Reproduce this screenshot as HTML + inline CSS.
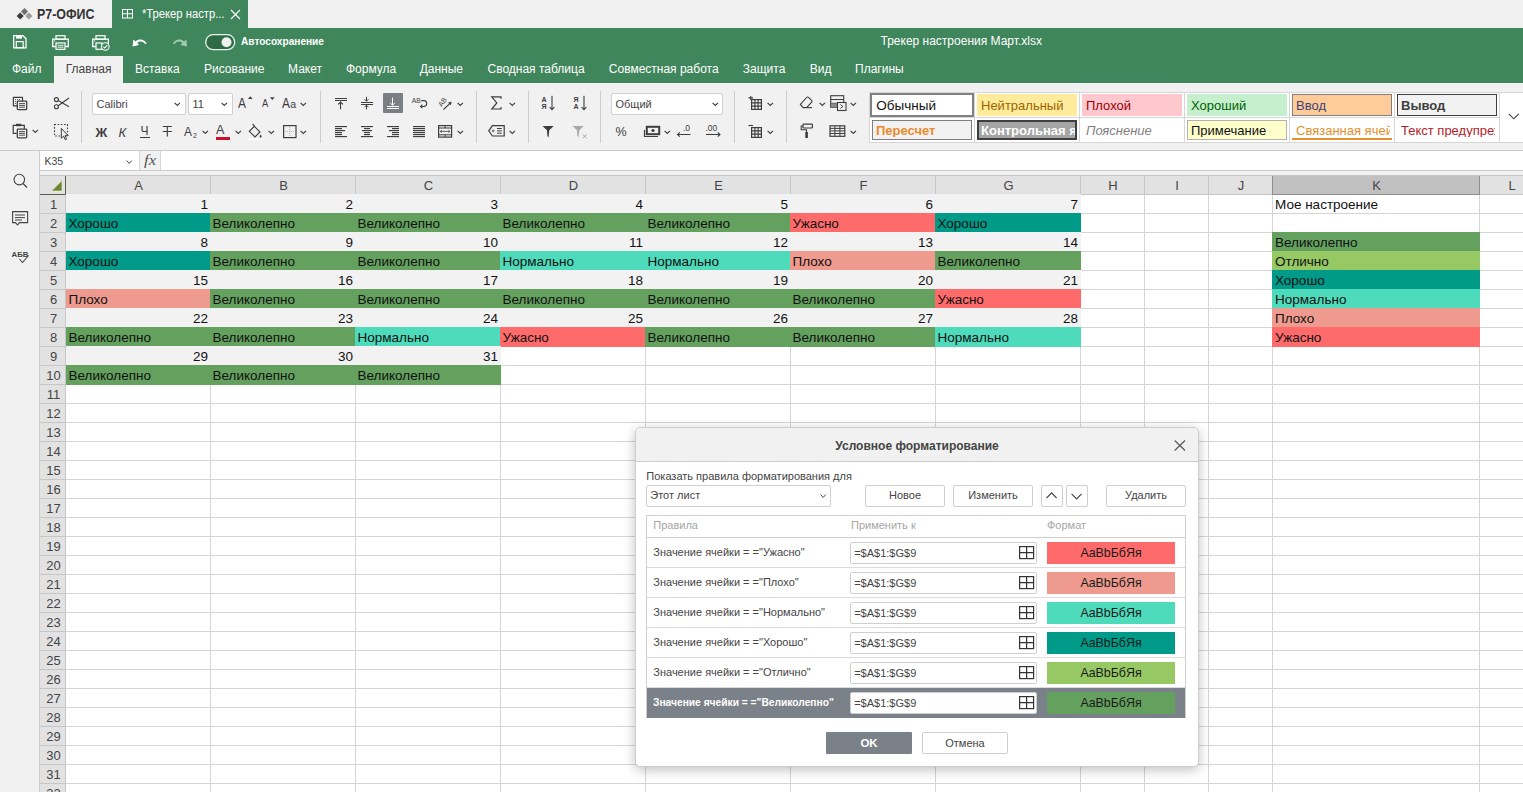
<!DOCTYPE html><html><head><meta charset="utf-8"><style>
*{margin:0;padding:0;box-sizing:border-box}
html,body{width:1523px;height:792px;overflow:hidden;background:#f1f1f1;font-family:"Liberation Sans",sans-serif;color:#444}
.ab{position:absolute}
.t{position:absolute;white-space:nowrap}
svg{position:absolute;overflow:visible}
</style></head><body>
<div class="ab" style="left:0;top:0;width:1523px;height:28px;background:#f0f0f0"></div>
<div class="ab" style="left:112px;top:0;width:136px;height:28px;background:#40865c"></div>
<div class="ab" style="left:0;top:28px;width:1523px;height:55px;background:#40865c"></div>
<div class="ab" style="left:54px;top:56px;width:69px;height:27px;background:#f1f1f1"></div>
<svg style="left:0;top:0" width="40" height="28"><rect x="17.70" y="13.50" width="5.0" height="5.0" fill="#3a3a3a" transform="rotate(45 20.2 16)"/><rect x="22.00" y="9.10" width="5.0" height="5.0" fill="#707070" transform="rotate(45 24.5 11.6)"/><rect x="26.40" y="13.50" width="5.0" height="5.0" fill="#9c9c9c" transform="rotate(45 28.9 16)"/></svg>
<div class="t" style="left:36.5px;top:7.15px;font-size:14px;line-height:14px;color:#333;font-weight:bold;transform:scaleX(0.886);transform-origin:0 0;">Р7-ОФИС</div>
<svg style="left:122px;top:9px" width="12" height="11"><rect x="0.5" y="0.5" width="10" height="8.5" fill="none" stroke="#fff" stroke-width="1"/><line x1="5.5" y1="0.5" x2="5.5" y2="9" stroke="#fff"/><line x1="0.5" y1="4.75" x2="10.5" y2="4.75" stroke="#fff"/></svg>
<div class="t" style="left:142px;top:7.84px;font-size:12px;line-height:12px;color:#fff;font-weight:normal;transform:scaleX(0.935);transform-origin:0 0;">*Трекер настр...</div>
<svg style="left:230px;top:9px" width="11" height="11"><path d="M1 1 L10 10 M10 1 L1 10" stroke="#fff" stroke-width="1.1"/></svg>
<svg style="left:13px;top:35px" width="14" height="14"><path d="M0.7 0.7 H10 L13 3.7 V12.8 H0.7 Z" fill="none" stroke="#fff" stroke-width="1.3"/><rect x="3" y="1" width="6" height="2.6" fill="#fff"/><rect x="3.3" y="6.6" width="6.9" height="6" fill="none" stroke="#fff" stroke-width="1.2"/></svg>
<svg style="left:52px;top:35px" width="18" height="16"><rect x="4" y="0.7" width="9" height="3.5" fill="none" stroke="#fff" stroke-width="1.2"/><path d="M3.5 11.5 H0.7 V4.2 H16.3 V11.5 H13.5" fill="none" stroke="#fff" stroke-width="1.3"/><circle cx="2.6" cy="5.9" r="0.6" fill="#fff"/><rect x="4" y="8" width="9" height="6.3" fill="none" stroke="#fff" stroke-width="1.2"/><line x1="5.5" y1="10.3" x2="11.5" y2="10.3" stroke="#fff" stroke-width="0.9"/><line x1="5.5" y1="12.2" x2="11.5" y2="12.2" stroke="#fff" stroke-width="0.9"/></svg>
<svg style="left:92px;top:35px" width="18" height="16"><rect x="4" y="0.7" width="9" height="3.5" fill="none" stroke="#fff" stroke-width="1.2"/><path d="M3.5 11.5 H0.7 V4.2 H16.3 V11.5 H13.5" fill="none" stroke="#fff" stroke-width="1.3"/><circle cx="2.6" cy="5.9" r="0.6" fill="#fff"/><rect x="4" y="8" width="6" height="6.3" fill="none" stroke="#fff" stroke-width="1.2"/><circle cx="13.3" cy="11.5" r="3.8" fill="#40865c" stroke="#fff" stroke-width="1.1"/><path d="M11.4 11.6 L12.8 13 L15.3 10.2" fill="none" stroke="#fff" stroke-width="1.1"/></svg>
<svg style="left:132px;top:38px" width="16" height="10"><path d="M3.5 3.5 C7 0.5 12 1 14.8 5.5 L13 6 C11 3 7.5 2.8 5.2 4.8 L7 7 L0.6 8.6 L1.3 1.4 Z" fill="#fff"/></svg>
<svg style="left:172px;top:38px" width="16" height="10"><path d="M12.1 3.5 C8.6 0.5 3.6 1 0.8 5.5 L2.6 6 C4.6 3 8.1 2.8 10.4 4.8 L8.6 7 L15 8.6 L14.3 1.4 Z" fill="#a6c9b2"/></svg>
<svg style="left:205px;top:34px" width="31" height="17"><rect x="0.7" y="0.7" width="29" height="15" rx="7.5" fill="#2e6a45" stroke="#e8f5ec" stroke-width="1.3"/><circle cx="21.5" cy="8.2" r="5" fill="#eef1ee"/></svg>
<div class="t" style="left:240.5px;top:35.69px;font-size:11px;line-height:11px;color:#fff;font-weight:bold;transform:scaleX(0.92);transform-origin:0 0;">Автосохранение</div>
<div class="t" style="left:880.5px;top:35.44px;font-size:12px;line-height:12px;color:#fff;font-weight:normal;">Трекер настроения Март.xlsx</div>
<div class="t" style="left:12px;top:62.84px;font-size:12px;line-height:12px;color:#fff;font-weight:normal;">Файл</div>
<div class="t" style="left:65.8px;top:62.84px;font-size:12px;line-height:12px;color:#444;font-weight:normal;">Главная</div>
<div class="t" style="left:135px;top:62.84px;font-size:12px;line-height:12px;color:#fff;font-weight:normal;">Вставка</div>
<div class="t" style="left:204px;top:62.84px;font-size:12px;line-height:12px;color:#fff;font-weight:normal;">Рисование</div>
<div class="t" style="left:288px;top:62.84px;font-size:12px;line-height:12px;color:#fff;font-weight:normal;">Макет</div>
<div class="t" style="left:346px;top:62.84px;font-size:12px;line-height:12px;color:#fff;font-weight:normal;">Формула</div>
<div class="t" style="left:419.7px;top:62.84px;font-size:12px;line-height:12px;color:#fff;font-weight:normal;">Данные</div>
<div class="t" style="left:487.5px;top:62.84px;font-size:12px;line-height:12px;color:#fff;font-weight:normal;">Сводная таблица</div>
<div class="t" style="left:608.8px;top:62.84px;font-size:12px;line-height:12px;color:#fff;font-weight:normal;">Совместная работа</div>
<div class="t" style="left:742.8px;top:62.84px;font-size:12px;line-height:12px;color:#fff;font-weight:normal;">Защита</div>
<div class="t" style="left:809.7px;top:62.84px;font-size:12px;line-height:12px;color:#fff;font-weight:normal;">Вид</div>
<div class="t" style="left:855px;top:62.84px;font-size:12px;line-height:12px;color:#fff;font-weight:normal;">Плагины</div>
<div class="ab" style="left:0;top:83px;width:1523px;height:67px;background:#f1f1f1"></div>
<div class="ab" style="left:0;top:150px;width:1523px;height:1px;background:#cbcbcb"></div>
<svg style="left:12px;top:96px" width="16" height="15" viewBox="0 0 16 15"><path d="M5 9.8 H1.4 V1.4 H10.5 V5" fill="none" stroke="#3d3d3d" stroke-width="1.2" stroke-linejoin="round"/><path d="M3 3.5 H8.5 M3 5.5 H4.5 M3 7.5 H4.5" stroke="#3d3d3d" stroke-width="0.8" stroke-dasharray="1 1"/><rect x="5.3" y="5.2" width="9.4" height="8.4" rx="0.8" fill="none" stroke="#3d3d3d" stroke-width="1.3"/><path d="M7 7.6 H13 M7 9.4 H13 M7 11.2 H13" stroke="#3d3d3d" stroke-width="0.9"/></svg>
<svg style="left:53px;top:96px" width="17" height="15" viewBox="0 0 17 15"><circle cx="3.4" cy="3.6" r="2" fill="none" stroke="#3d3d3d" stroke-width="1.1"/><circle cx="3.4" cy="10.7" r="2" fill="none" stroke="#3d3d3d" stroke-width="1.1"/><path d="M5.2 4.6 L16 10.8 M5.2 9.7 L16 2" stroke="#3d3d3d" stroke-width="1.1"/></svg>
<svg style="left:12px;top:123px" width="16" height="16" viewBox="0 0 16 16"><path d="M4.5 10.4 H1.2 V2.4 H12.3 V5.8" fill="none" stroke="#3d3d3d" stroke-width="1.2"/><rect x="4" y="0.8" width="5.2" height="2.4" fill="#3d3d3d"/><rect x="5.3" y="6.2" width="9.4" height="8.6" rx="0.8" fill="none" stroke="#3d3d3d" stroke-width="1.3"/><path d="M7 8.6 H13 M7 10.4 H13 M7 12.2 H13" stroke="#3d3d3d" stroke-width="0.9"/></svg>
<svg style="left:32px;top:129px" width="7" height="5" viewBox="0 0 7 5"><path d="M0.6 0.8 L3.3 3.5 L6 0.8" fill="none" stroke="#3d3d3d" stroke-width="1.1"/></svg>
<svg style="left:53px;top:123px" width="17" height="19" viewBox="0 0 17 19"><rect x="1.5" y="1.5" width="13" height="11.5" fill="none" stroke="#3d3d3d" stroke-width="1.1" stroke-dasharray="1.6 1.6"/><path d="M8.3 5.3 L8.3 15.3 L10.6 13.2 L12.3 16.8 L13.6 16.2 L12 12.7 L15.2 12.7 Z" fill="#f1f1f1" stroke="#3d3d3d" stroke-width="1" stroke-linejoin="round"/></svg>
<div class="ab" style="left:81px;top:91px;width:1px;height:52px;background:#cdcdcd"></div>
<div class="ab" style="left:92px;top:93px;width:94px;height:22px;background:#fff;border:1px solid #cfcfcf;border-radius:2px"></div>
<div class="t" style="left:96.5px;top:98.69px;font-size:11px;line-height:11px;color:#444;font-weight:normal;">Calibri</div>
<svg style="left:174px;top:101.5px" width="7" height="5" viewBox="0 0 7 5"><path d="M0.6 0.8 L3.3 3.5 L6 0.8" fill="none" stroke="#3d3d3d" stroke-width="1.1"/></svg>
<div class="ab" style="left:188px;top:93px;width:45px;height:22px;background:#fff;border:1px solid #cfcfcf;border-radius:2px"></div>
<div class="t" style="left:192.5px;top:98.69px;font-size:11px;line-height:11px;color:#444;font-weight:normal;">11</div>
<svg style="left:221px;top:101.5px" width="7" height="5" viewBox="0 0 7 5"><path d="M0.6 0.8 L3.3 3.5 L6 0.8" fill="none" stroke="#3d3d3d" stroke-width="1.1"/></svg>
<div class="t" style="left:238.3px;top:95.95px;font-size:14px;line-height:14px;color:#3d3d3d;font-weight:normal;transform:scaleX(0.85);transform-origin:0 0;">A</div>
<svg style="left:248px;top:96px" width="5" height="4" viewBox="0 0 5 4"><path d="M0 3 L2.3 0.3 L4.6 3 Z" fill="#3d3d3d"/></svg>
<div class="t" style="left:261.8px;top:98.49px;font-size:11px;line-height:11px;color:#3d3d3d;font-weight:normal;transform:scaleX(0.85);transform-origin:0 0;">A</div>
<svg style="left:270px;top:97px" width="5" height="4" viewBox="0 0 5 4"><path d="M0 0.3 L2.3 3 L4.6 0.3 Z" fill="#3d3d3d"/></svg>
<div class="t" style="left:281.5px;top:95.95px;font-size:14px;line-height:14px;color:#3d3d3d;font-weight:normal;transform:scaleX(0.85);transform-origin:0 0;">A</div>
<div class="t" style="left:290.2px;top:98.91px;font-size:10.5px;line-height:10.5px;color:#3d3d3d;font-weight:normal;">a</div>
<svg style="left:300px;top:101.5px" width="7" height="5" viewBox="0 0 7 5"><path d="M0.6 0.8 L3.3 3.5 L6 0.8" fill="none" stroke="#3d3d3d" stroke-width="1.1"/></svg>
<div class="t" style="left:95.5px;top:125.50px;font-size:13px;line-height:13px;color:#3d3d3d;font-weight:bold;">Ж</div>
<div class="t" style="left:118.5px;top:125.50px;font-size:13px;line-height:13px;color:#3d3d3d;font-weight:normal;font-style:italic;">К</div>
<div class="t" style="left:140.5px;top:125.34px;font-size:12px;line-height:12px;color:#3d3d3d;font-weight:normal;">Ч</div>
<div class="ab" style="left:140px;top:137px;width:10px;height:1.2px;background:#3d3d3d"></div>
<svg style="left:162px;top:125px" width="11" height="13" viewBox="0 0 11 13"><path d="M0.8 1.5 H9.8 M5.3 1.5 V11.5 M0.8 6.5 H9.8" stroke="#3d3d3d" stroke-width="1.1"/></svg>
<div class="t" style="left:183.5px;top:125.20px;font-size:13px;line-height:13px;color:#3d3d3d;font-weight:normal;transform:scaleX(0.92);transform-origin:0 0;">A</div>
<div class="t" style="left:193px;top:131.57px;font-size:7px;line-height:7px;color:#3d3d3d;font-weight:normal;">2</div>
<svg style="left:202px;top:129.5px" width="7" height="5" viewBox="0 0 7 5"><path d="M0.6 0.8 L3.3 3.5 L6 0.8" fill="none" stroke="#3d3d3d" stroke-width="1.1"/></svg>
<div class="t" style="left:216px;top:124.44px;font-size:12px;line-height:12px;color:#3d3d3d;font-weight:normal;transform:scaleX(1.05);transform-origin:0 0;">A</div>
<div class="ab" style="left:216px;top:137px;width:14px;height:2.6px;background:#c8102e"></div>
<svg style="left:235px;top:129.5px" width="7" height="5" viewBox="0 0 7 5"><path d="M0.6 0.8 L3.3 3.5 L6 0.8" fill="none" stroke="#3d3d3d" stroke-width="1.1"/></svg>
<svg style="left:248px;top:123px" width="17" height="17" viewBox="0 0 17 17"><path d="M6.3 3.3 L12 9 L7 14 L1.3 8.3 Z" fill="none" stroke="#3d3d3d" stroke-width="1.1"/><path d="M4.5 1 L6.8 3.4" stroke="#3d3d3d" stroke-width="1.1"/><path d="M12.6 11.6 Q14 13.2 13.6 14.1 A1 1 0 0 1 11.7 14.1 Q11.3 13.2 12.6 11.6 Z" fill="#3d3d3d"/><rect x="0" y="15.4" width="14" height="1.6" fill="#fff"/></svg>
<svg style="left:268px;top:129.5px" width="7" height="5" viewBox="0 0 7 5"><path d="M0.6 0.8 L3.3 3.5 L6 0.8" fill="none" stroke="#3d3d3d" stroke-width="1.1"/></svg>
<svg style="left:282px;top:124px" width="16" height="15" viewBox="0 0 16 15"><rect x="1.6" y="1.6" width="12.4" height="12" fill="none" stroke="#3d3d3d" stroke-width="1.2"/><path d="M7.8 3 V13 M3 7.6 H13" stroke="#9a9a9a" stroke-width="0.8" stroke-dasharray="1 1"/></svg>
<svg style="left:300px;top:129.5px" width="7" height="5" viewBox="0 0 7 5"><path d="M0.6 0.8 L3.3 3.5 L6 0.8" fill="none" stroke="#3d3d3d" stroke-width="1.1"/></svg>
<div class="ab" style="left:320px;top:91px;width:1px;height:52px;background:#cdcdcd"></div>
<svg style="left:334px;top:97px" width="14" height="14" viewBox="0 0 14 14"><rect x="1" y="1" width="12" height="1" fill="#3d3d3d"/><rect x="1" y="3" width="12" height="1" fill="#3d3d3d"/><path d="M6.5 5 V12.3 M4.1 7.4 L6.5 5 L8.9 7.4" fill="none" stroke="#3d3d3d" stroke-width="1.1"/></svg>
<svg style="left:360px;top:96px" width="14" height="14" viewBox="0 0 14 14"><rect x="1" y="6" width="12" height="1" fill="#3d3d3d"/><rect x="1" y="8" width="12" height="1" fill="#3d3d3d"/><path d="M6.5 0.8 V5.2 M4.5 3.2 L6.5 5.2 L8.5 3.2 M6.5 9.2 V13.4 M4.5 11.2 L6.5 9.2 L8.5 11.2" fill="none" stroke="#3d3d3d" stroke-width="1"/></svg>
<div class="ab" style="left:383px;top:93px;width:20px;height:20px;background:#7a7f86;border-radius:1px"></div>
<svg style="left:386px;top:96px" width="14" height="14" viewBox="0 0 14 14"><rect x="1" y="10" width="12" height="1" fill="#fff"/><rect x="1" y="12" width="12" height="1" fill="#fff"/><path d="M6.5 1.6 V9.2 M4.2 6.9 L6.5 9.2 L8.8 6.9" fill="none" stroke="#fff" stroke-width="1"/></svg>
<svg style="left:411px;top:96px" width="18" height="14" viewBox="0 0 18 14"><text x="0.8" y="6.6" font-family="Liberation Sans" font-size="6.8" fill="#3d3d3d">AB</text><path d="M10.2 4.6 H12.8 A2.9 2.9 0 0 1 12.8 10.4 H9.6 M11.4 8.6 L9.5 10.4 L11.4 12.2" fill="none" stroke="#3d3d3d" stroke-width="1.05"/></svg>
<svg style="left:437px;top:95px" width="16" height="16" viewBox="0 0 16 16"><text x="0" y="0" font-family="Liberation Sans" font-size="7" fill="#3d3d3d" transform="translate(4.8 12.2) rotate(-55)">AB</text><path d="M6.5 14.5 L14 7.3" stroke="#3d3d3d" stroke-width="1.05"/><path d="M14.6 6.7 L11 7.6 L13.8 10.3 Z" fill="#3d3d3d"/></svg>
<svg style="left:457px;top:101.5px" width="7" height="5" viewBox="0 0 7 5"><path d="M0.6 0.8 L3.3 3.5 L6 0.8" fill="none" stroke="#3d3d3d" stroke-width="1.1"/></svg>
<svg style="left:335px;top:126px" width="14" height="12" viewBox="0 0 14 12"><rect x="0" y="0" width="12" height="1.15" fill="#3d3d3d"/><rect x="0" y="2" width="7" height="1.15" fill="#3d3d3d"/><rect x="0" y="4" width="10" height="1.15" fill="#3d3d3d"/><rect x="0" y="6" width="7" height="1.15" fill="#3d3d3d"/><rect x="0" y="8" width="7" height="1.15" fill="#3d3d3d"/><rect x="0" y="10" width="12" height="1.15" fill="#3d3d3d"/></svg>
<svg style="left:361px;top:126px" width="14" height="12" viewBox="0 0 14 12"><rect x="0" y="0" width="12" height="1.15" fill="#3d3d3d"/><rect x="3" y="2" width="6" height="1.15" fill="#3d3d3d"/><rect x="1" y="4" width="10" height="1.15" fill="#3d3d3d"/><rect x="3" y="6" width="6" height="1.15" fill="#3d3d3d"/><rect x="3" y="8" width="6" height="1.15" fill="#3d3d3d"/><rect x="0" y="10" width="12" height="1.15" fill="#3d3d3d"/></svg>
<svg style="left:387px;top:126px" width="14" height="12" viewBox="0 0 14 12"><rect x="0" y="0" width="12" height="1.15" fill="#3d3d3d"/><rect x="5" y="2" width="7" height="1.15" fill="#3d3d3d"/><rect x="2" y="4" width="10" height="1.15" fill="#3d3d3d"/><rect x="5" y="6" width="7" height="1.15" fill="#3d3d3d"/><rect x="5" y="8" width="7" height="1.15" fill="#3d3d3d"/><rect x="0" y="10" width="12" height="1.15" fill="#3d3d3d"/></svg>
<svg style="left:413px;top:126px" width="14" height="12" viewBox="0 0 14 12"><rect x="0" y="0" width="12" height="1.15" fill="#3d3d3d"/><rect x="0" y="2" width="12" height="1.15" fill="#3d3d3d"/><rect x="0" y="4" width="12" height="1.15" fill="#3d3d3d"/><rect x="0" y="6" width="12" height="1.15" fill="#3d3d3d"/><rect x="0" y="8" width="12" height="1.15" fill="#3d3d3d"/><rect x="0" y="10" width="12" height="1.15" fill="#3d3d3d"/></svg>
<svg style="left:438px;top:125px" width="15" height="13" viewBox="0 0 15 13"><rect x="0.6" y="0.6" width="13" height="11.5" fill="none" stroke="#3d3d3d" stroke-width="1.2"/><path d="M0.6 3 H13.6 M0.6 9.8 H13.6 M7.1 0.6 V3 M7.1 9.8 V12" stroke="#3d3d3d" stroke-width="1"/><path d="M2.3 6.4 H12 M3.8 5.2 L2.3 6.4 L3.8 7.6 M10.5 5.2 L12 6.4 L10.5 7.6" fill="none" stroke="#3d3d3d" stroke-width="0.8"/></svg>
<svg style="left:457px;top:129.5px" width="7" height="5" viewBox="0 0 7 5"><path d="M0.6 0.8 L3.3 3.5 L6 0.8" fill="none" stroke="#3d3d3d" stroke-width="1.1"/></svg>
<div class="ab" style="left:476px;top:91px;width:1px;height:52px;background:#cdcdcd"></div>
<svg style="left:491px;top:96px" width="11" height="14" viewBox="0 0 11 14"><path d="M10 2.8 V0.8 H0.8 L5.8 6.9 L0.8 13 H10 V11" fill="none" stroke="#3d3d3d" stroke-width="1.2"/></svg>
<svg style="left:509px;top:101.5px" width="7" height="5" viewBox="0 0 7 5"><path d="M0.6 0.8 L3.3 3.5 L6 0.8" fill="none" stroke="#3d3d3d" stroke-width="1.1"/></svg>
<svg style="left:488px;top:125px" width="18" height="12" viewBox="0 0 18 12"><path d="M4.4 0.7 H16.2 V11 H4.4 L0.8 5.85 Z" fill="none" stroke="#3d3d3d" stroke-width="1.2"/><circle cx="5.2" cy="5.85" r="0.9" fill="none" stroke="#3d3d3d" stroke-width="0.8"/><path d="M9 3.5 H13.8 M9 5.85 H13.8 M9 8.2 H13.8" stroke="#3d3d3d" stroke-width="1"/></svg>
<svg style="left:509px;top:129.5px" width="7" height="5" viewBox="0 0 7 5"><path d="M0.6 0.8 L3.3 3.5 L6 0.8" fill="none" stroke="#3d3d3d" stroke-width="1.1"/></svg>
<div class="ab" style="left:528px;top:91px;width:1px;height:52px;background:#cdcdcd"></div>
<svg style="left:541px;top:95px" width="16" height="16" viewBox="0 0 16 16"><text x="0.5" y="6.8" font-family="Liberation Sans" font-weight="bold" font-size="7" fill="#3d3d3d">A</text><text x="0.5" y="14" font-family="Liberation Sans" font-weight="bold" font-size="7" fill="#3d3d3d">Я</text><path d="M11 0.8 V14.5 M8.6 12 L11 14.6 L13.4 12" fill="none" stroke="#3d3d3d" stroke-width="1.1"/></svg>
<svg style="left:573px;top:95px" width="16" height="16" viewBox="0 0 16 16"><text x="0.5" y="6.8" font-family="Liberation Sans" font-weight="bold" font-size="7" fill="#3d3d3d">Я</text><text x="0.5" y="14" font-family="Liberation Sans" font-weight="bold" font-size="7" fill="#3d3d3d">A</text><path d="M11 0.8 V14.5 M8.6 12 L11 14.6 L13.4 12" fill="none" stroke="#3d3d3d" stroke-width="1.1"/></svg>
<svg style="left:542px;top:125px" width="13" height="13" viewBox="0 0 13 13"><path d="M0.5 1 H11.7 L7.3 5.3 L6.5 12.5 L5.4 11 L5 5.3 Z" fill="#3d3d3d"/></svg>
<svg style="left:572px;top:125px" width="16" height="14" viewBox="0 0 16 14"><path d="M0.5 1 H11.7 L7.3 5.3 L6.5 12.5 L5.4 11 L5 5.3 Z" fill="#a8a8a8"/><path d="M10.8 9.4 L14.6 13.2 M14.6 9.4 L10.8 13.2" stroke="#a8a8a8" stroke-width="1"/></svg>
<div class="ab" style="left:600px;top:91px;width:1px;height:52px;background:#cdcdcd"></div>
<div class="ab" style="left:611px;top:93px;width:112px;height:22px;background:#fff;border:1px solid #cfcfcf;border-radius:2px"></div>
<div class="t" style="left:615.5px;top:98.69px;font-size:11px;line-height:11px;color:#444;font-weight:normal;">Общий</div>
<svg style="left:712px;top:101.5px" width="7" height="5" viewBox="0 0 7 5"><path d="M0.6 0.8 L3.3 3.5 L6 0.8" fill="none" stroke="#3d3d3d" stroke-width="1.1"/></svg>
<div class="t" style="left:615.5px;top:125.92px;font-size:12.5px;line-height:12.5px;color:#3d3d3d;font-weight:normal;">%</div>
<svg style="left:643px;top:124px" width="18" height="15" viewBox="0 0 18 15"><path d="M1.5 6 V12.5 H15" fill="none" stroke="#3d3d3d" stroke-width="1.2"/><rect x="3.8" y="2.8" width="12.4" height="7.4" fill="none" stroke="#3d3d3d" stroke-width="2"/><circle cx="10" cy="6.5" r="1.6" fill="#3d3d3d"/></svg>
<svg style="left:664px;top:129.5px" width="7" height="5" viewBox="0 0 7 5"><path d="M0.6 0.8 L3.3 3.5 L6 0.8" fill="none" stroke="#3d3d3d" stroke-width="1.1"/></svg>
<svg style="left:676px;top:124px" width="16" height="16" viewBox="0 0 16 16"><text x="7" y="7" font-family="Liberation Sans" font-size="8.5" fill="#3d3d3d">.0</text><path d="M14.5 10.5 H1.5 M3.8 8.3 L1.5 10.5 L3.8 12.7" fill="none" stroke="#3d3d3d" stroke-width="1.1"/></svg>
<svg style="left:705px;top:124px" width="17" height="16" viewBox="0 0 17 16"><text x="0.5" y="7" font-family="Liberation Sans" font-size="8.5" fill="#3d3d3d">.00</text><path d="M1 10.5 H15 M12.7 8.3 L15 10.5 L12.7 12.7" fill="none" stroke="#3d3d3d" stroke-width="1.1"/></svg>
<div class="ab" style="left:734px;top:91px;width:1px;height:52px;background:#cdcdcd"></div>
<svg style="left:747.5px;top:95.5px" width="15" height="15" viewBox="0 0 15 15"><rect x="3.6" y="3.6" width="9.8" height="9.8" fill="none" stroke="#3d3d3d" stroke-width="1.2"/><path d="M6.9 3.6 V13.4 M10.1 3.6 V13.4 M3.6 6.9 H13.4 M3.6 10.1 H13.4" stroke="#3d3d3d" stroke-width="1.1"/><path d="M0.5 1.9 H5 M2.75 0 V4" stroke="#3d3d3d" stroke-width="1.1"/></svg>
<svg style="left:767px;top:101.5px" width="7" height="5" viewBox="0 0 7 5"><path d="M0.6 0.8 L3.3 3.5 L6 0.8" fill="none" stroke="#3d3d3d" stroke-width="1.1"/></svg>
<svg style="left:747.5px;top:123.5px" width="15" height="15" viewBox="0 0 15 15"><rect x="3.6" y="3.6" width="9.8" height="9.8" fill="none" stroke="#3d3d3d" stroke-width="1.2"/><path d="M6.9 3.6 V13.4 M10.1 3.6 V13.4 M3.6 6.9 H13.4 M3.6 10.1 H13.4" stroke="#3d3d3d" stroke-width="1.1"/><path d="M0.5 1.5 H5" stroke="#3d3d3d" stroke-width="1.1"/></svg>
<svg style="left:767px;top:129.5px" width="7" height="5" viewBox="0 0 7 5"><path d="M0.6 0.8 L3.3 3.5 L6 0.8" fill="none" stroke="#3d3d3d" stroke-width="1.1"/></svg>
<div class="ab" style="left:786px;top:91px;width:1px;height:52px;background:#cdcdcd"></div>
<svg style="left:799px;top:96px" width="15" height="13" viewBox="0 0 15 13"><path d="M1.4 8.4 L7.6 1.5 A1.3 1.3 0 0 1 9.5 1.4 L12.6 4.3 A1.3 1.3 0 0 1 12.7 6.2 L7.6 11.6 H4.2 Z" fill="none" stroke="#3d3d3d" stroke-width="1.1"/><path d="M7.6 11.6 H13" stroke="#3d3d3d" stroke-width="1.1"/></svg>
<svg style="left:819px;top:101.5px" width="7" height="5" viewBox="0 0 7 5"><path d="M0.6 0.8 L3.3 3.5 L6 0.8" fill="none" stroke="#3d3d3d" stroke-width="1.1"/></svg>
<svg style="left:830px;top:95px" width="17" height="17" viewBox="0 0 17 17"><rect x="0.7" y="0.7" width="13" height="11.5" fill="none" stroke="#3d3d3d" stroke-width="1.1"/><path d="M0.7 4.5 H13.7 M0.7 8.3 H8" stroke="#3d3d3d" stroke-width="1"/><rect x="1" y="8.5" width="6.5" height="3.5" fill="#8a8a8a"/><rect x="7.5" y="7.5" width="8.5" height="8" fill="#f1f1f1" stroke="#3d3d3d" stroke-width="1.1"/><path d="M10.3 9.5 L13 11.5 L10.3 13.5" fill="none" stroke="#3d3d3d" stroke-width="0.9"/></svg>
<svg style="left:850px;top:101.5px" width="7" height="5" viewBox="0 0 7 5"><path d="M0.6 0.8 L3.3 3.5 L6 0.8" fill="none" stroke="#3d3d3d" stroke-width="1.1"/></svg>
<svg style="left:800px;top:123px" width="14" height="16" viewBox="0 0 14 16"><rect x="3" y="1.2" width="9.4" height="3.8" rx="0.8" fill="none" stroke="#3d3d3d" stroke-width="1.2"/><path d="M3 3 H1.2 V6.8 H6.5 V9" fill="none" stroke="#3d3d3d" stroke-width="1.1"/><rect x="5.3" y="9" width="2.6" height="6" fill="#3d3d3d"/></svg>
<svg style="left:829px;top:125px" width="18" height="12" viewBox="0 0 18 12"><rect x="1" y="0.8" width="14.8" height="10.5" fill="none" stroke="#3d3d3d" stroke-width="1.2"/><path d="M1 3.4 H15.8 M1 5.9 H15.8 M1 8.5 H15.8 M5.9 0.8 V11.3 M10.9 0.8 V11.3" stroke="#3d3d3d" stroke-width="1"/></svg>
<svg style="left:850px;top:129.5px" width="7" height="5" viewBox="0 0 7 5"><path d="M0.6 0.8 L3.3 3.5 L6 0.8" fill="none" stroke="#3d3d3d" stroke-width="1.1"/></svg>
<div class="ab" style="left:869px;top:92px;width:660px;height:51px;background:#fff;border:1px solid #d6d6d6"></div>
<div class="ab" style="left:974px;top:92px;width:1px;height:51px;background:#d6d6d6"></div>
<div class="ab" style="left:1079px;top:92px;width:1px;height:51px;background:#d6d6d6"></div>
<div class="ab" style="left:1184px;top:92px;width:1px;height:51px;background:#d6d6d6"></div>
<div class="ab" style="left:1289px;top:92px;width:1px;height:51px;background:#d6d6d6"></div>
<div class="ab" style="left:1394px;top:92px;width:1px;height:51px;background:#d6d6d6"></div>
<div class="ab" style="left:1499px;top:92px;width:1px;height:51px;background:#d6d6d6"></div>
<div class="ab" style="left:869px;top:117px;width:631px;height:1px;background:#d6d6d6"></div>
<div class="ab" style="left:870px;top:93px;width:104px;height:24px;background:#fff;border:2px solid #808080"></div>
<div class="t" style="left:876.3px;top:98.57px;font-size:13.5px;line-height:13.5px;color:#111;font-weight:normal;">Обычный</div>
<div class="ab" style="left:977px;top:94px;width:100px;height:22px;background:#ffeb9c;;overflow:hidden"></div>
<div class="t" style="left:981px;top:99.00px;width:94px;overflow:hidden;font-size:13px;line-height:13px;color:#9c6500;">Нейтральный</div>
<div class="ab" style="left:1082px;top:94px;width:100px;height:22px;background:#ffc7ce;;overflow:hidden"></div>
<div class="t" style="left:1086px;top:99.00px;width:94px;overflow:hidden;font-size:13px;line-height:13px;color:#9c0006;">Плохой</div>
<div class="ab" style="left:1187px;top:94px;width:100px;height:22px;background:#c6efce;;overflow:hidden"></div>
<div class="t" style="left:1191px;top:99.00px;width:94px;overflow:hidden;font-size:13px;line-height:13px;color:#006100;">Хороший</div>
<div class="ab" style="left:1292px;top:94px;width:100px;height:22px;background:#ffcc99;border:1px solid #7f7f7f;overflow:hidden"></div>
<div class="t" style="left:1296px;top:99.00px;width:94px;overflow:hidden;font-size:13px;line-height:13px;color:#3f3f76;">Ввод</div>
<div class="ab" style="left:1397px;top:94px;width:100px;height:22px;background:#f2f2f2;border:1.5px solid #3f3f3f;overflow:hidden"></div>
<div class="t" style="left:1401px;top:99.00px;width:94px;overflow:hidden;font-size:13px;line-height:13px;color:#3f3f3f;font-weight:bold;">Вывод</div>
<div class="ab" style="left:872px;top:120px;width:100px;height:20px;background:#f2f2f2;border:1px solid #7f7f7f;overflow:hidden"></div>
<div class="t" style="left:876px;top:124.00px;width:94px;overflow:hidden;font-size:13px;line-height:13px;color:#ea8a2a;font-weight:bold;">Пересчет</div>
<div class="ab" style="left:977px;top:120px;width:100px;height:20px;background:#a5a5a5;border:2.5px solid #3f3f3f;overflow:hidden"></div>
<div class="t" style="left:981px;top:124.00px;width:94px;overflow:hidden;font-size:13px;line-height:13px;color:#fff;font-weight:bold;">Контрольная ячейка</div>
<div class="ab" style="left:1082px;top:120px;width:100px;height:20px;background:#fff;;overflow:hidden"></div>
<div class="t" style="left:1086px;top:124.00px;width:94px;overflow:hidden;font-size:13px;line-height:13px;color:#7f7f7f;font-style:italic;">Пояснение</div>
<div class="ab" style="left:1187px;top:120px;width:100px;height:20px;background:#ffffcc;border:1px solid #b2b2b2;overflow:hidden"></div>
<div class="t" style="left:1191px;top:124.00px;width:94px;overflow:hidden;font-size:13px;line-height:13px;color:#111;">Примечание</div>
<div class="ab" style="left:1292px;top:120px;width:100px;height:20px;background:#fff;border-bottom:2.5px solid #e4902e;overflow:hidden"></div>
<div class="t" style="left:1296px;top:124.00px;width:94px;overflow:hidden;font-size:13px;line-height:13px;color:#e4902e;">Связанная ячейка</div>
<div class="ab" style="left:1397px;top:120px;width:100px;height:20px;background:#fff;;overflow:hidden"></div>
<div class="t" style="left:1401px;top:124.00px;width:94px;overflow:hidden;font-size:13px;line-height:13px;color:#b5202a;">Текст предупреждения</div>
<svg style="left:1508px;top:113px" width="12" height="8" viewBox="0 0 12 8"><path d="M0.8 0.8 L5.8 5.8 L10.8 0.8" fill="none" stroke="#3d3d3d" stroke-width="1.1"/></svg>
<div class="ab" style="left:40px;top:151px;width:1483px;height:19px;background:#fff"></div>
<div class="ab" style="left:139px;top:151px;width:22px;height:19px;background:#f1f1f1;border-left:1px solid #d5d5d5;border-right:1px solid #d5d5d5"></div>
<div class="ab" style="left:40px;top:170px;width:1483px;height:1px;background:#cbcbcb"></div>
<div class="ab" style="left:40px;top:171px;width:1483px;height:4px;background:#f1f1f1"></div>
<div class="t" style="left:44.5px;top:156.11px;font-size:10.5px;line-height:10.5px;color:#444;font-weight:normal;">K35</div>
<svg style="left:126px;top:159.5px" width="7" height="5" viewBox="0 0 7 5"><path d="M0.6 0.6 L3.2 3.4 L5.8 0.6" fill="none" stroke="#444" stroke-width="1"/></svg>
<div class="t" style="left:144.3px;top:153.30px;font-size:15px;line-height:15px;color:#555;font-weight:normal;font-family:'Liberation Serif',serif;font-style:italic;transform:scaleX(1.12);transform-origin:0 0;">fx</div>
<svg style="left:12px;top:173px" width="16" height="16" viewBox="0 0 16 16"><circle cx="7.3" cy="6.6" r="5.3" fill="none" stroke="#444" stroke-width="1.1"/><path d="M11 10.5 L15 14.5" stroke="#444" stroke-width="1.2"/></svg>
<svg style="left:12px;top:211px" width="17" height="16" viewBox="0 0 17 16"><path d="M0.6 0.6 H15.6 V11.6 H7.5 L5.5 14 L3.5 11.6 H0.6 Z" fill="none" stroke="#444" stroke-width="1.1"/><path d="M3 4 H13 M3 6.6 H13 M3 9 H10" stroke="#444" stroke-width="1"/></svg>
<svg style="left:11px;top:249px" width="19" height="15" viewBox="0 0 19 15"><text x="0.5" y="8" font-family="Liberation Sans" font-weight="bold" font-size="7.8" fill="#444">АБВ</text><path d="M8.5 10 L11.5 13.5 L17.5 6.5" fill="none" stroke="#444" stroke-width="1.1"/></svg>
<div class="ab" style="left:39px;top:151px;width:1px;height:641px;background:#cbcbcb"></div>
<div class="ab" style="left:66px;top:195px;width:1457px;height:597px;background:#fff"></div>
<div class="ab" style="left:66px;top:213px;width:1457px;height:1px;background:#d5d5d5"></div>
<div class="ab" style="left:66px;top:232px;width:1457px;height:1px;background:#d5d5d5"></div>
<div class="ab" style="left:66px;top:251px;width:1457px;height:1px;background:#d5d5d5"></div>
<div class="ab" style="left:66px;top:270px;width:1457px;height:1px;background:#d5d5d5"></div>
<div class="ab" style="left:66px;top:289px;width:1457px;height:1px;background:#d5d5d5"></div>
<div class="ab" style="left:66px;top:308px;width:1457px;height:1px;background:#d5d5d5"></div>
<div class="ab" style="left:66px;top:327px;width:1457px;height:1px;background:#d5d5d5"></div>
<div class="ab" style="left:66px;top:346px;width:1457px;height:1px;background:#d5d5d5"></div>
<div class="ab" style="left:66px;top:365px;width:1457px;height:1px;background:#d5d5d5"></div>
<div class="ab" style="left:66px;top:384px;width:1457px;height:1px;background:#d5d5d5"></div>
<div class="ab" style="left:66px;top:403px;width:1457px;height:1px;background:#d5d5d5"></div>
<div class="ab" style="left:66px;top:422px;width:1457px;height:1px;background:#d5d5d5"></div>
<div class="ab" style="left:66px;top:441px;width:1457px;height:1px;background:#d5d5d5"></div>
<div class="ab" style="left:66px;top:460px;width:1457px;height:1px;background:#d5d5d5"></div>
<div class="ab" style="left:66px;top:479px;width:1457px;height:1px;background:#d5d5d5"></div>
<div class="ab" style="left:66px;top:498px;width:1457px;height:1px;background:#d5d5d5"></div>
<div class="ab" style="left:66px;top:517px;width:1457px;height:1px;background:#d5d5d5"></div>
<div class="ab" style="left:66px;top:536px;width:1457px;height:1px;background:#d5d5d5"></div>
<div class="ab" style="left:66px;top:555px;width:1457px;height:1px;background:#d5d5d5"></div>
<div class="ab" style="left:66px;top:574px;width:1457px;height:1px;background:#d5d5d5"></div>
<div class="ab" style="left:66px;top:593px;width:1457px;height:1px;background:#d5d5d5"></div>
<div class="ab" style="left:66px;top:612px;width:1457px;height:1px;background:#d5d5d5"></div>
<div class="ab" style="left:66px;top:631px;width:1457px;height:1px;background:#d5d5d5"></div>
<div class="ab" style="left:66px;top:650px;width:1457px;height:1px;background:#d5d5d5"></div>
<div class="ab" style="left:66px;top:669px;width:1457px;height:1px;background:#d5d5d5"></div>
<div class="ab" style="left:66px;top:688px;width:1457px;height:1px;background:#d5d5d5"></div>
<div class="ab" style="left:66px;top:707px;width:1457px;height:1px;background:#d5d5d5"></div>
<div class="ab" style="left:66px;top:726px;width:1457px;height:1px;background:#d5d5d5"></div>
<div class="ab" style="left:66px;top:745px;width:1457px;height:1px;background:#d5d5d5"></div>
<div class="ab" style="left:66px;top:764px;width:1457px;height:1px;background:#d5d5d5"></div>
<div class="ab" style="left:66px;top:783px;width:1457px;height:1px;background:#d5d5d5"></div>
<div class="ab" style="left:66px;top:802px;width:1457px;height:1px;background:#d5d5d5"></div>
<div class="ab" style="left:210px;top:195px;width:1px;height:597px;background:#d5d5d5"></div>
<div class="ab" style="left:355px;top:195px;width:1px;height:597px;background:#d5d5d5"></div>
<div class="ab" style="left:500px;top:195px;width:1px;height:597px;background:#d5d5d5"></div>
<div class="ab" style="left:645px;top:195px;width:1px;height:597px;background:#d5d5d5"></div>
<div class="ab" style="left:790px;top:195px;width:1px;height:597px;background:#d5d5d5"></div>
<div class="ab" style="left:935px;top:195px;width:1px;height:597px;background:#d5d5d5"></div>
<div class="ab" style="left:1080px;top:195px;width:1px;height:597px;background:#d5d5d5"></div>
<div class="ab" style="left:1144px;top:195px;width:1px;height:597px;background:#d5d5d5"></div>
<div class="ab" style="left:1208px;top:195px;width:1px;height:597px;background:#d5d5d5"></div>
<div class="ab" style="left:1272px;top:195px;width:1px;height:597px;background:#d5d5d5"></div>
<div class="ab" style="left:1479px;top:195px;width:1px;height:597px;background:#d5d5d5"></div>
<div class="ab" style="left:1543px;top:195px;width:1px;height:597px;background:#d5d5d5"></div>
<div class="ab" style="left:40px;top:175px;width:1483px;height:1px;background:#c6c6c6"></div>
<div class="ab" style="left:40px;top:176px;width:1483px;height:18px;background:#e2e2e2"></div>
<div class="ab" style="left:40px;top:194px;width:1483px;height:1px;background:#c6c6c6"></div>
<div class="ab" style="left:40px;top:195px;width:25px;height:597px;background:#e2e2e2"></div>
<div class="ab" style="left:65px;top:176px;width:1px;height:616px;background:#c6c6c6"></div>
<div class="ab" style="left:1273px;top:176px;width:206px;height:18px;background:#c0c0c0"></div>
<div class="ab" style="left:210px;top:176px;width:1px;height:18px;background:#c6c6c6"></div>
<div class="ab" style="left:355px;top:176px;width:1px;height:18px;background:#c6c6c6"></div>
<div class="ab" style="left:500px;top:176px;width:1px;height:18px;background:#c6c6c6"></div>
<div class="ab" style="left:645px;top:176px;width:1px;height:18px;background:#c6c6c6"></div>
<div class="ab" style="left:790px;top:176px;width:1px;height:18px;background:#c6c6c6"></div>
<div class="ab" style="left:935px;top:176px;width:1px;height:18px;background:#c6c6c6"></div>
<div class="ab" style="left:1080px;top:176px;width:1px;height:18px;background:#c6c6c6"></div>
<div class="ab" style="left:1144px;top:176px;width:1px;height:18px;background:#c6c6c6"></div>
<div class="ab" style="left:1208px;top:176px;width:1px;height:18px;background:#c6c6c6"></div>
<div class="ab" style="left:1272px;top:176px;width:1px;height:18px;background:#c6c6c6"></div>
<div class="ab" style="left:1479px;top:176px;width:1px;height:18px;background:#c6c6c6"></div>
<div class="ab" style="left:1543px;top:176px;width:1px;height:18px;background:#c6c6c6"></div>
<div class="ab" style="left:1272px;top:176px;width:1px;height:19px;background:#8e8e8e"></div>
<div class="ab" style="left:1272px;top:194px;width:208px;height:1px;background:#8e8e8e"></div>
<div class="ab" style="left:1479px;top:176px;width:1px;height:19px;background:#8e8e8e"></div>
<div class="t" style="left:66px;width:145px;text-align:center;top:179.00px;font-size:13px;line-height:13px;color:#444;font-weight:normal;">A</div>
<div class="t" style="left:211px;width:145px;text-align:center;top:179.00px;font-size:13px;line-height:13px;color:#444;font-weight:normal;">B</div>
<div class="t" style="left:356px;width:145px;text-align:center;top:179.00px;font-size:13px;line-height:13px;color:#444;font-weight:normal;">C</div>
<div class="t" style="left:501px;width:145px;text-align:center;top:179.00px;font-size:13px;line-height:13px;color:#444;font-weight:normal;">D</div>
<div class="t" style="left:646px;width:145px;text-align:center;top:179.00px;font-size:13px;line-height:13px;color:#444;font-weight:normal;">E</div>
<div class="t" style="left:791px;width:145px;text-align:center;top:179.00px;font-size:13px;line-height:13px;color:#444;font-weight:normal;">F</div>
<div class="t" style="left:936px;width:145px;text-align:center;top:179.00px;font-size:13px;line-height:13px;color:#444;font-weight:normal;">G</div>
<div class="t" style="left:1081px;width:64px;text-align:center;top:179.00px;font-size:13px;line-height:13px;color:#444;font-weight:normal;">H</div>
<div class="t" style="left:1145px;width:64px;text-align:center;top:179.00px;font-size:13px;line-height:13px;color:#444;font-weight:normal;">I</div>
<div class="t" style="left:1209px;width:64px;text-align:center;top:179.00px;font-size:13px;line-height:13px;color:#444;font-weight:normal;">J</div>
<div class="t" style="left:1273px;width:207px;text-align:center;top:179.00px;font-size:13px;line-height:13px;color:#444;font-weight:normal;">K</div>
<div class="t" style="left:1480px;width:64px;text-align:center;top:179.00px;font-size:13px;line-height:13px;color:#444;font-weight:normal;">L</div>
<div class="ab" style="left:40px;top:194px;width:25px;height:1px;background:#c6c6c6"></div>
<div class="t" style="left:41px;width:25px;text-align:center;top:198.00px;font-size:13px;line-height:13px;color:#444;font-weight:normal;">1</div>
<div class="ab" style="left:40px;top:213px;width:25px;height:1px;background:#c6c6c6"></div>
<div class="t" style="left:41px;width:25px;text-align:center;top:217.00px;font-size:13px;line-height:13px;color:#444;font-weight:normal;">2</div>
<div class="ab" style="left:40px;top:232px;width:25px;height:1px;background:#c6c6c6"></div>
<div class="t" style="left:41px;width:25px;text-align:center;top:236.00px;font-size:13px;line-height:13px;color:#444;font-weight:normal;">3</div>
<div class="ab" style="left:40px;top:251px;width:25px;height:1px;background:#c6c6c6"></div>
<div class="t" style="left:41px;width:25px;text-align:center;top:255.00px;font-size:13px;line-height:13px;color:#444;font-weight:normal;">4</div>
<div class="ab" style="left:40px;top:270px;width:25px;height:1px;background:#c6c6c6"></div>
<div class="t" style="left:41px;width:25px;text-align:center;top:274.00px;font-size:13px;line-height:13px;color:#444;font-weight:normal;">5</div>
<div class="ab" style="left:40px;top:289px;width:25px;height:1px;background:#c6c6c6"></div>
<div class="t" style="left:41px;width:25px;text-align:center;top:293.00px;font-size:13px;line-height:13px;color:#444;font-weight:normal;">6</div>
<div class="ab" style="left:40px;top:308px;width:25px;height:1px;background:#c6c6c6"></div>
<div class="t" style="left:41px;width:25px;text-align:center;top:312.00px;font-size:13px;line-height:13px;color:#444;font-weight:normal;">7</div>
<div class="ab" style="left:40px;top:327px;width:25px;height:1px;background:#c6c6c6"></div>
<div class="t" style="left:41px;width:25px;text-align:center;top:331.00px;font-size:13px;line-height:13px;color:#444;font-weight:normal;">8</div>
<div class="ab" style="left:40px;top:346px;width:25px;height:1px;background:#c6c6c6"></div>
<div class="t" style="left:41px;width:25px;text-align:center;top:350.00px;font-size:13px;line-height:13px;color:#444;font-weight:normal;">9</div>
<div class="ab" style="left:40px;top:365px;width:25px;height:1px;background:#c6c6c6"></div>
<div class="t" style="left:41px;width:25px;text-align:center;top:369.00px;font-size:13px;line-height:13px;color:#444;font-weight:normal;">10</div>
<div class="ab" style="left:40px;top:384px;width:25px;height:1px;background:#c6c6c6"></div>
<div class="t" style="left:41px;width:25px;text-align:center;top:388.00px;font-size:13px;line-height:13px;color:#444;font-weight:normal;">11</div>
<div class="ab" style="left:40px;top:403px;width:25px;height:1px;background:#c6c6c6"></div>
<div class="t" style="left:41px;width:25px;text-align:center;top:407.00px;font-size:13px;line-height:13px;color:#444;font-weight:normal;">12</div>
<div class="ab" style="left:40px;top:422px;width:25px;height:1px;background:#c6c6c6"></div>
<div class="t" style="left:41px;width:25px;text-align:center;top:426.00px;font-size:13px;line-height:13px;color:#444;font-weight:normal;">13</div>
<div class="ab" style="left:40px;top:441px;width:25px;height:1px;background:#c6c6c6"></div>
<div class="t" style="left:41px;width:25px;text-align:center;top:445.00px;font-size:13px;line-height:13px;color:#444;font-weight:normal;">14</div>
<div class="ab" style="left:40px;top:460px;width:25px;height:1px;background:#c6c6c6"></div>
<div class="t" style="left:41px;width:25px;text-align:center;top:464.00px;font-size:13px;line-height:13px;color:#444;font-weight:normal;">15</div>
<div class="ab" style="left:40px;top:479px;width:25px;height:1px;background:#c6c6c6"></div>
<div class="t" style="left:41px;width:25px;text-align:center;top:483.00px;font-size:13px;line-height:13px;color:#444;font-weight:normal;">16</div>
<div class="ab" style="left:40px;top:498px;width:25px;height:1px;background:#c6c6c6"></div>
<div class="t" style="left:41px;width:25px;text-align:center;top:502.00px;font-size:13px;line-height:13px;color:#444;font-weight:normal;">17</div>
<div class="ab" style="left:40px;top:517px;width:25px;height:1px;background:#c6c6c6"></div>
<div class="t" style="left:41px;width:25px;text-align:center;top:521.00px;font-size:13px;line-height:13px;color:#444;font-weight:normal;">18</div>
<div class="ab" style="left:40px;top:536px;width:25px;height:1px;background:#c6c6c6"></div>
<div class="t" style="left:41px;width:25px;text-align:center;top:540.00px;font-size:13px;line-height:13px;color:#444;font-weight:normal;">19</div>
<div class="ab" style="left:40px;top:555px;width:25px;height:1px;background:#c6c6c6"></div>
<div class="t" style="left:41px;width:25px;text-align:center;top:559.00px;font-size:13px;line-height:13px;color:#444;font-weight:normal;">20</div>
<div class="ab" style="left:40px;top:574px;width:25px;height:1px;background:#c6c6c6"></div>
<div class="t" style="left:41px;width:25px;text-align:center;top:578.00px;font-size:13px;line-height:13px;color:#444;font-weight:normal;">21</div>
<div class="ab" style="left:40px;top:593px;width:25px;height:1px;background:#c6c6c6"></div>
<div class="t" style="left:41px;width:25px;text-align:center;top:597.00px;font-size:13px;line-height:13px;color:#444;font-weight:normal;">22</div>
<div class="ab" style="left:40px;top:612px;width:25px;height:1px;background:#c6c6c6"></div>
<div class="t" style="left:41px;width:25px;text-align:center;top:616.00px;font-size:13px;line-height:13px;color:#444;font-weight:normal;">23</div>
<div class="ab" style="left:40px;top:631px;width:25px;height:1px;background:#c6c6c6"></div>
<div class="t" style="left:41px;width:25px;text-align:center;top:635.00px;font-size:13px;line-height:13px;color:#444;font-weight:normal;">24</div>
<div class="ab" style="left:40px;top:650px;width:25px;height:1px;background:#c6c6c6"></div>
<div class="t" style="left:41px;width:25px;text-align:center;top:654.00px;font-size:13px;line-height:13px;color:#444;font-weight:normal;">25</div>
<div class="ab" style="left:40px;top:669px;width:25px;height:1px;background:#c6c6c6"></div>
<div class="t" style="left:41px;width:25px;text-align:center;top:673.00px;font-size:13px;line-height:13px;color:#444;font-weight:normal;">26</div>
<div class="ab" style="left:40px;top:688px;width:25px;height:1px;background:#c6c6c6"></div>
<div class="t" style="left:41px;width:25px;text-align:center;top:692.00px;font-size:13px;line-height:13px;color:#444;font-weight:normal;">27</div>
<div class="ab" style="left:40px;top:707px;width:25px;height:1px;background:#c6c6c6"></div>
<div class="t" style="left:41px;width:25px;text-align:center;top:711.00px;font-size:13px;line-height:13px;color:#444;font-weight:normal;">28</div>
<div class="ab" style="left:40px;top:726px;width:25px;height:1px;background:#c6c6c6"></div>
<div class="t" style="left:41px;width:25px;text-align:center;top:730.00px;font-size:13px;line-height:13px;color:#444;font-weight:normal;">29</div>
<div class="ab" style="left:40px;top:745px;width:25px;height:1px;background:#c6c6c6"></div>
<div class="t" style="left:41px;width:25px;text-align:center;top:749.00px;font-size:13px;line-height:13px;color:#444;font-weight:normal;">30</div>
<div class="ab" style="left:40px;top:764px;width:25px;height:1px;background:#c6c6c6"></div>
<div class="t" style="left:41px;width:25px;text-align:center;top:768.00px;font-size:13px;line-height:13px;color:#444;font-weight:normal;">31</div>
<div class="ab" style="left:40px;top:783px;width:25px;height:1px;background:#c6c6c6"></div>
<div class="t" style="left:41px;width:25px;text-align:center;top:787.00px;font-size:13px;line-height:13px;color:#444;font-weight:normal;">32</div>
<svg style="left:40px;top:176px" width="26" height="19"><path d="M22 4.5 L22 15 L11.5 15 Z" fill="#6b8530" stroke="#eef5d5" stroke-width="0.6"/><path d="M0 18.5 H25.5 V0" fill="none" stroke="#5e5e50" stroke-width="1"/></svg>
<div class="ab" style="left:66px;top:194px;width:145px;height:20px;background:#f2f2f2"></div>
<div class="t" style="right:1315px;top:197.57px;font-size:13.5px;line-height:13.5px;color:#111;font-weight:normal;">1</div>
<div class="ab" style="left:210px;top:194px;width:146px;height:20px;background:#f2f2f2"></div>
<div class="t" style="right:1170px;top:197.57px;font-size:13.5px;line-height:13.5px;color:#111;font-weight:normal;">2</div>
<div class="ab" style="left:355px;top:194px;width:146px;height:20px;background:#f2f2f2"></div>
<div class="t" style="right:1025px;top:197.57px;font-size:13.5px;line-height:13.5px;color:#111;font-weight:normal;">3</div>
<div class="ab" style="left:500px;top:194px;width:146px;height:20px;background:#f2f2f2"></div>
<div class="t" style="right:880px;top:197.57px;font-size:13.5px;line-height:13.5px;color:#111;font-weight:normal;">4</div>
<div class="ab" style="left:645px;top:194px;width:146px;height:20px;background:#f2f2f2"></div>
<div class="t" style="right:735px;top:197.57px;font-size:13.5px;line-height:13.5px;color:#111;font-weight:normal;">5</div>
<div class="ab" style="left:790px;top:194px;width:146px;height:20px;background:#f2f2f2"></div>
<div class="t" style="right:590px;top:197.57px;font-size:13.5px;line-height:13.5px;color:#111;font-weight:normal;">6</div>
<div class="ab" style="left:935px;top:194px;width:146px;height:20px;background:#f2f2f2"></div>
<div class="t" style="right:445px;top:197.57px;font-size:13.5px;line-height:13.5px;color:#111;font-weight:normal;">7</div>
<div class="ab" style="left:66px;top:213px;width:145px;height:20px;background:#009a88"></div>
<div class="t" style="left:68.5px;top:216.57px;font-size:13.5px;line-height:13.5px;color:#111;font-weight:normal;">Хорошо</div>
<div class="ab" style="left:210px;top:213px;width:146px;height:20px;background:#64a15f"></div>
<div class="t" style="left:212.5px;top:216.57px;font-size:13.5px;line-height:13.5px;color:#111;font-weight:normal;">Великолепно</div>
<div class="ab" style="left:355px;top:213px;width:146px;height:20px;background:#64a15f"></div>
<div class="t" style="left:357.5px;top:216.57px;font-size:13.5px;line-height:13.5px;color:#111;font-weight:normal;">Великолепно</div>
<div class="ab" style="left:500px;top:213px;width:146px;height:20px;background:#64a15f"></div>
<div class="t" style="left:502.5px;top:216.57px;font-size:13.5px;line-height:13.5px;color:#111;font-weight:normal;">Великолепно</div>
<div class="ab" style="left:645px;top:213px;width:146px;height:20px;background:#64a15f"></div>
<div class="t" style="left:647.5px;top:216.57px;font-size:13.5px;line-height:13.5px;color:#111;font-weight:normal;">Великолепно</div>
<div class="ab" style="left:790px;top:213px;width:146px;height:20px;background:#ff6b6b"></div>
<div class="t" style="left:792.5px;top:216.57px;font-size:13.5px;line-height:13.5px;color:#111;font-weight:normal;">Ужасно</div>
<div class="ab" style="left:935px;top:213px;width:146px;height:20px;background:#009a88"></div>
<div class="t" style="left:937.5px;top:216.57px;font-size:13.5px;line-height:13.5px;color:#111;font-weight:normal;">Хорошо</div>
<div class="ab" style="left:66px;top:232px;width:145px;height:20px;background:#f2f2f2"></div>
<div class="t" style="right:1315px;top:235.57px;font-size:13.5px;line-height:13.5px;color:#111;font-weight:normal;">8</div>
<div class="ab" style="left:210px;top:232px;width:146px;height:20px;background:#f2f2f2"></div>
<div class="t" style="right:1170px;top:235.57px;font-size:13.5px;line-height:13.5px;color:#111;font-weight:normal;">9</div>
<div class="ab" style="left:355px;top:232px;width:146px;height:20px;background:#f2f2f2"></div>
<div class="t" style="right:1025px;top:235.57px;font-size:13.5px;line-height:13.5px;color:#111;font-weight:normal;">10</div>
<div class="ab" style="left:500px;top:232px;width:146px;height:20px;background:#f2f2f2"></div>
<div class="t" style="right:880px;top:235.57px;font-size:13.5px;line-height:13.5px;color:#111;font-weight:normal;">11</div>
<div class="ab" style="left:645px;top:232px;width:146px;height:20px;background:#f2f2f2"></div>
<div class="t" style="right:735px;top:235.57px;font-size:13.5px;line-height:13.5px;color:#111;font-weight:normal;">12</div>
<div class="ab" style="left:790px;top:232px;width:146px;height:20px;background:#f2f2f2"></div>
<div class="t" style="right:590px;top:235.57px;font-size:13.5px;line-height:13.5px;color:#111;font-weight:normal;">13</div>
<div class="ab" style="left:935px;top:232px;width:146px;height:20px;background:#f2f2f2"></div>
<div class="t" style="right:445px;top:235.57px;font-size:13.5px;line-height:13.5px;color:#111;font-weight:normal;">14</div>
<div class="ab" style="left:66px;top:251px;width:145px;height:20px;background:#009a88"></div>
<div class="t" style="left:68.5px;top:254.57px;font-size:13.5px;line-height:13.5px;color:#111;font-weight:normal;">Хорошо</div>
<div class="ab" style="left:210px;top:251px;width:146px;height:20px;background:#64a15f"></div>
<div class="t" style="left:212.5px;top:254.57px;font-size:13.5px;line-height:13.5px;color:#111;font-weight:normal;">Великолепно</div>
<div class="ab" style="left:355px;top:251px;width:146px;height:20px;background:#64a15f"></div>
<div class="t" style="left:357.5px;top:254.57px;font-size:13.5px;line-height:13.5px;color:#111;font-weight:normal;">Великолепно</div>
<div class="ab" style="left:500px;top:251px;width:146px;height:20px;background:#4edbbb"></div>
<div class="t" style="left:502.5px;top:254.57px;font-size:13.5px;line-height:13.5px;color:#111;font-weight:normal;">Нормально</div>
<div class="ab" style="left:645px;top:251px;width:146px;height:20px;background:#4edbbb"></div>
<div class="t" style="left:647.5px;top:254.57px;font-size:13.5px;line-height:13.5px;color:#111;font-weight:normal;">Нормально</div>
<div class="ab" style="left:790px;top:251px;width:146px;height:20px;background:#ee9a8e"></div>
<div class="t" style="left:792.5px;top:254.57px;font-size:13.5px;line-height:13.5px;color:#111;font-weight:normal;">Плохо</div>
<div class="ab" style="left:935px;top:251px;width:146px;height:20px;background:#64a15f"></div>
<div class="t" style="left:937.5px;top:254.57px;font-size:13.5px;line-height:13.5px;color:#111;font-weight:normal;">Великолепно</div>
<div class="ab" style="left:66px;top:270px;width:145px;height:20px;background:#f2f2f2"></div>
<div class="t" style="right:1315px;top:273.57px;font-size:13.5px;line-height:13.5px;color:#111;font-weight:normal;">15</div>
<div class="ab" style="left:210px;top:270px;width:146px;height:20px;background:#f2f2f2"></div>
<div class="t" style="right:1170px;top:273.57px;font-size:13.5px;line-height:13.5px;color:#111;font-weight:normal;">16</div>
<div class="ab" style="left:355px;top:270px;width:146px;height:20px;background:#f2f2f2"></div>
<div class="t" style="right:1025px;top:273.57px;font-size:13.5px;line-height:13.5px;color:#111;font-weight:normal;">17</div>
<div class="ab" style="left:500px;top:270px;width:146px;height:20px;background:#f2f2f2"></div>
<div class="t" style="right:880px;top:273.57px;font-size:13.5px;line-height:13.5px;color:#111;font-weight:normal;">18</div>
<div class="ab" style="left:645px;top:270px;width:146px;height:20px;background:#f2f2f2"></div>
<div class="t" style="right:735px;top:273.57px;font-size:13.5px;line-height:13.5px;color:#111;font-weight:normal;">19</div>
<div class="ab" style="left:790px;top:270px;width:146px;height:20px;background:#f2f2f2"></div>
<div class="t" style="right:590px;top:273.57px;font-size:13.5px;line-height:13.5px;color:#111;font-weight:normal;">20</div>
<div class="ab" style="left:935px;top:270px;width:146px;height:20px;background:#f2f2f2"></div>
<div class="t" style="right:445px;top:273.57px;font-size:13.5px;line-height:13.5px;color:#111;font-weight:normal;">21</div>
<div class="ab" style="left:66px;top:289px;width:145px;height:20px;background:#ee9a8e"></div>
<div class="t" style="left:68.5px;top:292.57px;font-size:13.5px;line-height:13.5px;color:#111;font-weight:normal;">Плохо</div>
<div class="ab" style="left:210px;top:289px;width:146px;height:20px;background:#64a15f"></div>
<div class="t" style="left:212.5px;top:292.57px;font-size:13.5px;line-height:13.5px;color:#111;font-weight:normal;">Великолепно</div>
<div class="ab" style="left:355px;top:289px;width:146px;height:20px;background:#64a15f"></div>
<div class="t" style="left:357.5px;top:292.57px;font-size:13.5px;line-height:13.5px;color:#111;font-weight:normal;">Великолепно</div>
<div class="ab" style="left:500px;top:289px;width:146px;height:20px;background:#64a15f"></div>
<div class="t" style="left:502.5px;top:292.57px;font-size:13.5px;line-height:13.5px;color:#111;font-weight:normal;">Великолепно</div>
<div class="ab" style="left:645px;top:289px;width:146px;height:20px;background:#64a15f"></div>
<div class="t" style="left:647.5px;top:292.57px;font-size:13.5px;line-height:13.5px;color:#111;font-weight:normal;">Великолепно</div>
<div class="ab" style="left:790px;top:289px;width:146px;height:20px;background:#64a15f"></div>
<div class="t" style="left:792.5px;top:292.57px;font-size:13.5px;line-height:13.5px;color:#111;font-weight:normal;">Великолепно</div>
<div class="ab" style="left:935px;top:289px;width:146px;height:20px;background:#ff6b6b"></div>
<div class="t" style="left:937.5px;top:292.57px;font-size:13.5px;line-height:13.5px;color:#111;font-weight:normal;">Ужасно</div>
<div class="ab" style="left:66px;top:308px;width:145px;height:20px;background:#f2f2f2"></div>
<div class="t" style="right:1315px;top:311.57px;font-size:13.5px;line-height:13.5px;color:#111;font-weight:normal;">22</div>
<div class="ab" style="left:210px;top:308px;width:146px;height:20px;background:#f2f2f2"></div>
<div class="t" style="right:1170px;top:311.57px;font-size:13.5px;line-height:13.5px;color:#111;font-weight:normal;">23</div>
<div class="ab" style="left:355px;top:308px;width:146px;height:20px;background:#f2f2f2"></div>
<div class="t" style="right:1025px;top:311.57px;font-size:13.5px;line-height:13.5px;color:#111;font-weight:normal;">24</div>
<div class="ab" style="left:500px;top:308px;width:146px;height:20px;background:#f2f2f2"></div>
<div class="t" style="right:880px;top:311.57px;font-size:13.5px;line-height:13.5px;color:#111;font-weight:normal;">25</div>
<div class="ab" style="left:645px;top:308px;width:146px;height:20px;background:#f2f2f2"></div>
<div class="t" style="right:735px;top:311.57px;font-size:13.5px;line-height:13.5px;color:#111;font-weight:normal;">26</div>
<div class="ab" style="left:790px;top:308px;width:146px;height:20px;background:#f2f2f2"></div>
<div class="t" style="right:590px;top:311.57px;font-size:13.5px;line-height:13.5px;color:#111;font-weight:normal;">27</div>
<div class="ab" style="left:935px;top:308px;width:146px;height:20px;background:#f2f2f2"></div>
<div class="t" style="right:445px;top:311.57px;font-size:13.5px;line-height:13.5px;color:#111;font-weight:normal;">28</div>
<div class="ab" style="left:66px;top:327px;width:145px;height:20px;background:#64a15f"></div>
<div class="t" style="left:68.5px;top:330.57px;font-size:13.5px;line-height:13.5px;color:#111;font-weight:normal;">Великолепно</div>
<div class="ab" style="left:210px;top:327px;width:146px;height:20px;background:#64a15f"></div>
<div class="t" style="left:212.5px;top:330.57px;font-size:13.5px;line-height:13.5px;color:#111;font-weight:normal;">Великолепно</div>
<div class="ab" style="left:355px;top:327px;width:146px;height:20px;background:#4edbbb"></div>
<div class="t" style="left:357.5px;top:330.57px;font-size:13.5px;line-height:13.5px;color:#111;font-weight:normal;">Нормально</div>
<div class="ab" style="left:500px;top:327px;width:146px;height:20px;background:#ff6b6b"></div>
<div class="t" style="left:502.5px;top:330.57px;font-size:13.5px;line-height:13.5px;color:#111;font-weight:normal;">Ужасно</div>
<div class="ab" style="left:645px;top:327px;width:146px;height:20px;background:#64a15f"></div>
<div class="t" style="left:647.5px;top:330.57px;font-size:13.5px;line-height:13.5px;color:#111;font-weight:normal;">Великолепно</div>
<div class="ab" style="left:790px;top:327px;width:146px;height:20px;background:#64a15f"></div>
<div class="t" style="left:792.5px;top:330.57px;font-size:13.5px;line-height:13.5px;color:#111;font-weight:normal;">Великолепно</div>
<div class="ab" style="left:935px;top:327px;width:146px;height:20px;background:#4edbbb"></div>
<div class="t" style="left:937.5px;top:330.57px;font-size:13.5px;line-height:13.5px;color:#111;font-weight:normal;">Нормально</div>
<div class="ab" style="left:66px;top:346px;width:145px;height:20px;background:#f2f2f2"></div>
<div class="t" style="right:1315px;top:349.57px;font-size:13.5px;line-height:13.5px;color:#111;font-weight:normal;">29</div>
<div class="ab" style="left:210px;top:346px;width:146px;height:20px;background:#f2f2f2"></div>
<div class="t" style="right:1170px;top:349.57px;font-size:13.5px;line-height:13.5px;color:#111;font-weight:normal;">30</div>
<div class="ab" style="left:355px;top:346px;width:146px;height:20px;background:#f2f2f2"></div>
<div class="t" style="right:1025px;top:349.57px;font-size:13.5px;line-height:13.5px;color:#111;font-weight:normal;">31</div>
<div class="ab" style="left:66px;top:365px;width:145px;height:20px;background:#64a15f"></div>
<div class="t" style="left:68.5px;top:368.57px;font-size:13.5px;line-height:13.5px;color:#111;font-weight:normal;">Великолепно</div>
<div class="ab" style="left:210px;top:365px;width:146px;height:20px;background:#64a15f"></div>
<div class="t" style="left:212.5px;top:368.57px;font-size:13.5px;line-height:13.5px;color:#111;font-weight:normal;">Великолепно</div>
<div class="ab" style="left:355px;top:365px;width:146px;height:20px;background:#64a15f"></div>
<div class="t" style="left:357.5px;top:368.57px;font-size:13.5px;line-height:13.5px;color:#111;font-weight:normal;">Великолепно</div>
<div class="t" style="left:1275px;top:197.57px;font-size:13.5px;line-height:13.5px;color:#111;font-weight:normal;">Мое настроение</div>
<div class="ab" style="left:1272px;top:232px;width:208px;height:20px;background:#64a15f"></div>
<div class="t" style="left:1275px;top:235.57px;font-size:13.5px;line-height:13.5px;color:#111;font-weight:normal;">Великолепно</div>
<div class="ab" style="left:1272px;top:251px;width:208px;height:20px;background:#96c864"></div>
<div class="t" style="left:1275px;top:254.57px;font-size:13.5px;line-height:13.5px;color:#111;font-weight:normal;">Отлично</div>
<div class="ab" style="left:1272px;top:270px;width:208px;height:20px;background:#009a88"></div>
<div class="t" style="left:1275px;top:273.57px;font-size:13.5px;line-height:13.5px;color:#111;font-weight:normal;">Хорошо</div>
<div class="ab" style="left:1272px;top:289px;width:208px;height:20px;background:#4edbbb"></div>
<div class="t" style="left:1275px;top:292.57px;font-size:13.5px;line-height:13.5px;color:#111;font-weight:normal;">Нормально</div>
<div class="ab" style="left:1272px;top:308px;width:208px;height:20px;background:#ee9a8e"></div>
<div class="t" style="left:1275px;top:311.57px;font-size:13.5px;line-height:13.5px;color:#111;font-weight:normal;">Плохо</div>
<div class="ab" style="left:1272px;top:327px;width:208px;height:20px;background:#ff6b6b"></div>
<div class="t" style="left:1275px;top:330.57px;font-size:13.5px;line-height:13.5px;color:#111;font-weight:normal;">Ужасно</div>
<div class="ab" style="left:635px;top:427px;width:564px;height:340px;background:#fff;border:1px solid #cdcdcd;border-radius:5px;box-shadow:0 3px 12px rgba(0,0,0,0.25)"></div>
<div class="ab" style="left:636px;top:428px;width:562px;height:33px;background:#f1f1f1;border-radius:4px 4px 0 0"></div>
<div class="ab" style="left:636px;top:461px;width:562px;height:1px;background:#cdcdcd"></div>
<div class="t" style="left:635px;width:564px;text-align:center;top:439.84px;font-size:12px;line-height:12px;color:#444;font-weight:bold;">Условное форматирование</div>
<svg style="left:1174px;top:440px" width="12" height="11" viewBox="0 0 12 11"><path d="M0.7 0.5 L11 10.5 M11 0.5 L0.7 10.5" stroke="#555" stroke-width="1.1"/></svg>
<div class="t" style="left:646.3px;top:470.79px;font-size:11px;line-height:11px;color:#444;font-weight:normal;">Показать правила форматирования для</div>
<div class="ab" style="left:646px;top:485px;width:185px;height:22px;background:#fff;border:1px solid #cfcfcf;border-radius:2px"></div>
<div class="t" style="left:650.3px;top:490.49px;font-size:11px;line-height:11px;color:#444;font-weight:normal;">Этот лист</div>
<svg style="left:820px;top:493.5px" width="7" height="5" viewBox="0 0 7 5"><path d="M0.6 0.6 L3.2 3.4 L5.8 0.6" fill="none" stroke="#444" stroke-width="1"/></svg>
<div class="ab" style="left:865px;top:485px;width:80px;height:22px;background:#fff;border:1px solid #cfcfcf;border-radius:2px"></div>
<div class="t" style="left:865px;width:80px;text-align:center;top:489.69px;font-size:11px;line-height:11px;color:#444;font-weight:normal;">Новое</div>
<div class="ab" style="left:953px;top:485px;width:80px;height:22px;background:#fff;border:1px solid #cfcfcf;border-radius:2px"></div>
<div class="t" style="left:953px;width:80px;text-align:center;top:489.69px;font-size:11px;line-height:11px;color:#444;font-weight:normal;">Изменить</div>
<div class="ab" style="left:1041px;top:485px;width:22px;height:22px;background:#fff;border:1px solid #cfcfcf;border-radius:2px"></div>
<svg style="left:1046px;top:492px" width="12" height="7" viewBox="0 0 12 7"><path d="M0.6 6 L5.6 0.9 L10.6 6" fill="none" stroke="#444" stroke-width="1.1"/></svg>
<div class="ab" style="left:1066px;top:485px;width:22px;height:22px;background:#fff;border:1px solid #cfcfcf;border-radius:2px"></div>
<svg style="left:1071px;top:493px" width="12" height="7" viewBox="0 0 12 7"><path d="M0.6 0.9 L5.6 6 L10.6 0.9" fill="none" stroke="#444" stroke-width="1.1"/></svg>
<div class="ab" style="left:1106px;top:485px;width:80px;height:22px;background:#fff;border:1px solid #cfcfcf;border-radius:2px"></div>
<div class="t" style="left:1106px;width:80px;text-align:center;top:489.69px;font-size:11px;line-height:11px;color:#444;font-weight:normal;">Удалить</div>
<div class="ab" style="left:646px;top:515px;width:540px;height:203px;border:1px solid #cfcfcf;background:#fff"></div>
<div class="t" style="left:653.3px;top:520.49px;font-size:11px;line-height:11px;color:#a6a6a6;font-weight:normal;">Правила</div>
<div class="t" style="left:851px;top:520.49px;font-size:11px;line-height:11px;color:#a6a6a6;font-weight:normal;">Применить к</div>
<div class="t" style="left:1047px;top:520.49px;font-size:11px;line-height:11px;color:#a6a6a6;font-weight:normal;">Формат</div>
<div class="ab" style="left:647px;top:537px;width:538px;height:1px;background:#cfcfcf"></div>
<div class="ab" style="left:647px;top:567px;width:538px;height:1px;background:#dcdcdc"></div>
<div class="t" style="left:653.3px;top:546.69px;font-size:11px;line-height:11px;color:#444;font-weight:normal;">Значение ячейки = ="Ужасно"</div>
<div class="ab" style="left:850px;top:542px;width:187px;height:22px;background:#fff;border:1px solid #cfcfcf;border-radius:2px"></div>
<div class="t" style="left:854.2px;top:547.69px;font-size:11px;line-height:11px;color:#444;font-weight:normal;">=$A$1:$G$9</div>
<svg style="left:1019px;top:546px" width="16" height="14" viewBox="0 0 16 14"><rect x="0.6" y="0.6" width="14" height="12" fill="none" stroke="#333" stroke-width="1.2"/><path d="M7.6 0.6 V12.6 M0.6 6.6 H14.6" stroke="#333" stroke-width="1.2"/></svg>
<div class="ab" style="left:1047px;top:542px;width:128px;height:22px;background:#ff6b6b"></div>
<div class="t" style="left:1047px;width:128px;text-align:center;top:547.20px;font-size:12.4px;line-height:12.4px;color:#1a1a1a;font-weight:normal;">AaBbБбЯя</div>
<div class="ab" style="left:647px;top:597px;width:538px;height:1px;background:#dcdcdc"></div>
<div class="t" style="left:653.3px;top:576.69px;font-size:11px;line-height:11px;color:#444;font-weight:normal;">Значение ячейки = ="Плохо"</div>
<div class="ab" style="left:850px;top:572px;width:187px;height:22px;background:#fff;border:1px solid #cfcfcf;border-radius:2px"></div>
<div class="t" style="left:854.2px;top:577.69px;font-size:11px;line-height:11px;color:#444;font-weight:normal;">=$A$1:$G$9</div>
<svg style="left:1019px;top:576px" width="16" height="14" viewBox="0 0 16 14"><rect x="0.6" y="0.6" width="14" height="12" fill="none" stroke="#333" stroke-width="1.2"/><path d="M7.6 0.6 V12.6 M0.6 6.6 H14.6" stroke="#333" stroke-width="1.2"/></svg>
<div class="ab" style="left:1047px;top:572px;width:128px;height:22px;background:#ee9a8e"></div>
<div class="t" style="left:1047px;width:128px;text-align:center;top:577.20px;font-size:12.4px;line-height:12.4px;color:#1a1a1a;font-weight:normal;">AaBbБбЯя</div>
<div class="ab" style="left:647px;top:627px;width:538px;height:1px;background:#dcdcdc"></div>
<div class="t" style="left:653.3px;top:606.69px;font-size:11px;line-height:11px;color:#444;font-weight:normal;">Значение ячейки = ="Нормально"</div>
<div class="ab" style="left:850px;top:602px;width:187px;height:22px;background:#fff;border:1px solid #cfcfcf;border-radius:2px"></div>
<div class="t" style="left:854.2px;top:607.69px;font-size:11px;line-height:11px;color:#444;font-weight:normal;">=$A$1:$G$9</div>
<svg style="left:1019px;top:606px" width="16" height="14" viewBox="0 0 16 14"><rect x="0.6" y="0.6" width="14" height="12" fill="none" stroke="#333" stroke-width="1.2"/><path d="M7.6 0.6 V12.6 M0.6 6.6 H14.6" stroke="#333" stroke-width="1.2"/></svg>
<div class="ab" style="left:1047px;top:602px;width:128px;height:22px;background:#4edbbb"></div>
<div class="t" style="left:1047px;width:128px;text-align:center;top:607.20px;font-size:12.4px;line-height:12.4px;color:#1a1a1a;font-weight:normal;">AaBbБбЯя</div>
<div class="ab" style="left:647px;top:657px;width:538px;height:1px;background:#dcdcdc"></div>
<div class="t" style="left:653.3px;top:636.69px;font-size:11px;line-height:11px;color:#444;font-weight:normal;">Значение ячейки = ="Хорошо"</div>
<div class="ab" style="left:850px;top:632px;width:187px;height:22px;background:#fff;border:1px solid #cfcfcf;border-radius:2px"></div>
<div class="t" style="left:854.2px;top:637.69px;font-size:11px;line-height:11px;color:#444;font-weight:normal;">=$A$1:$G$9</div>
<svg style="left:1019px;top:636px" width="16" height="14" viewBox="0 0 16 14"><rect x="0.6" y="0.6" width="14" height="12" fill="none" stroke="#333" stroke-width="1.2"/><path d="M7.6 0.6 V12.6 M0.6 6.6 H14.6" stroke="#333" stroke-width="1.2"/></svg>
<div class="ab" style="left:1047px;top:632px;width:128px;height:22px;background:#009a88"></div>
<div class="t" style="left:1047px;width:128px;text-align:center;top:637.20px;font-size:12.4px;line-height:12.4px;color:#1a1a1a;font-weight:normal;">AaBbБбЯя</div>
<div class="ab" style="left:647px;top:687px;width:538px;height:1px;background:#dcdcdc"></div>
<div class="t" style="left:653.3px;top:666.69px;font-size:11px;line-height:11px;color:#444;font-weight:normal;">Значение ячейки = ="Отлично"</div>
<div class="ab" style="left:850px;top:662px;width:187px;height:22px;background:#fff;border:1px solid #cfcfcf;border-radius:2px"></div>
<div class="t" style="left:854.2px;top:667.69px;font-size:11px;line-height:11px;color:#444;font-weight:normal;">=$A$1:$G$9</div>
<svg style="left:1019px;top:666px" width="16" height="14" viewBox="0 0 16 14"><rect x="0.6" y="0.6" width="14" height="12" fill="none" stroke="#333" stroke-width="1.2"/><path d="M7.6 0.6 V12.6 M0.6 6.6 H14.6" stroke="#333" stroke-width="1.2"/></svg>
<div class="ab" style="left:1047px;top:662px;width:128px;height:22px;background:#96c864"></div>
<div class="t" style="left:1047px;width:128px;text-align:center;top:667.20px;font-size:12.4px;line-height:12.4px;color:#1a1a1a;font-weight:normal;">AaBbБбЯя</div>
<div class="ab" style="left:647px;top:688px;width:538px;height:30px;background:#7b8188"></div>
<div class="t" style="left:653.3px;top:696.69px;font-size:11px;line-height:11px;color:#fff;font-weight:bold;transform:scaleX(0.93);transform-origin:0 0;">Значение ячейки = ="Великолепно"</div>
<div class="ab" style="left:850px;top:692px;width:187px;height:22px;background:#fff;border:1px solid #cfcfcf;border-radius:2px"></div>
<div class="t" style="left:854.2px;top:697.69px;font-size:11px;line-height:11px;color:#444;font-weight:normal;">=$A$1:$G$9</div>
<svg style="left:1019px;top:696px" width="16" height="14" viewBox="0 0 16 14"><rect x="0.6" y="0.6" width="14" height="12" fill="none" stroke="#333" stroke-width="1.2"/><path d="M7.6 0.6 V12.6 M0.6 6.6 H14.6" stroke="#333" stroke-width="1.2"/></svg>
<div class="ab" style="left:1047px;top:692px;width:128px;height:22px;background:#64a15f"></div>
<div class="t" style="left:1047px;width:128px;text-align:center;top:697.20px;font-size:12.4px;line-height:12.4px;color:#1a1a1a;font-weight:normal;">AaBbБбЯя</div>
<div class="ab" style="left:826px;top:732px;width:86px;height:22px;background:#7b8188;border-radius:1px"></div>
<div class="t" style="left:826px;width:86px;text-align:center;top:737.77px;font-size:11.5px;line-height:11.5px;color:#fff;font-weight:bold;">OK</div>
<div class="ab" style="left:922px;top:732px;width:86px;height:22px;background:#fff;border:1px solid #cfcfcf;border-radius:2px"></div>
<div class="t" style="left:922px;width:86px;text-align:center;top:738.19px;font-size:11px;line-height:11px;color:#444;font-weight:normal;">Отмена</div>
</body></html>
